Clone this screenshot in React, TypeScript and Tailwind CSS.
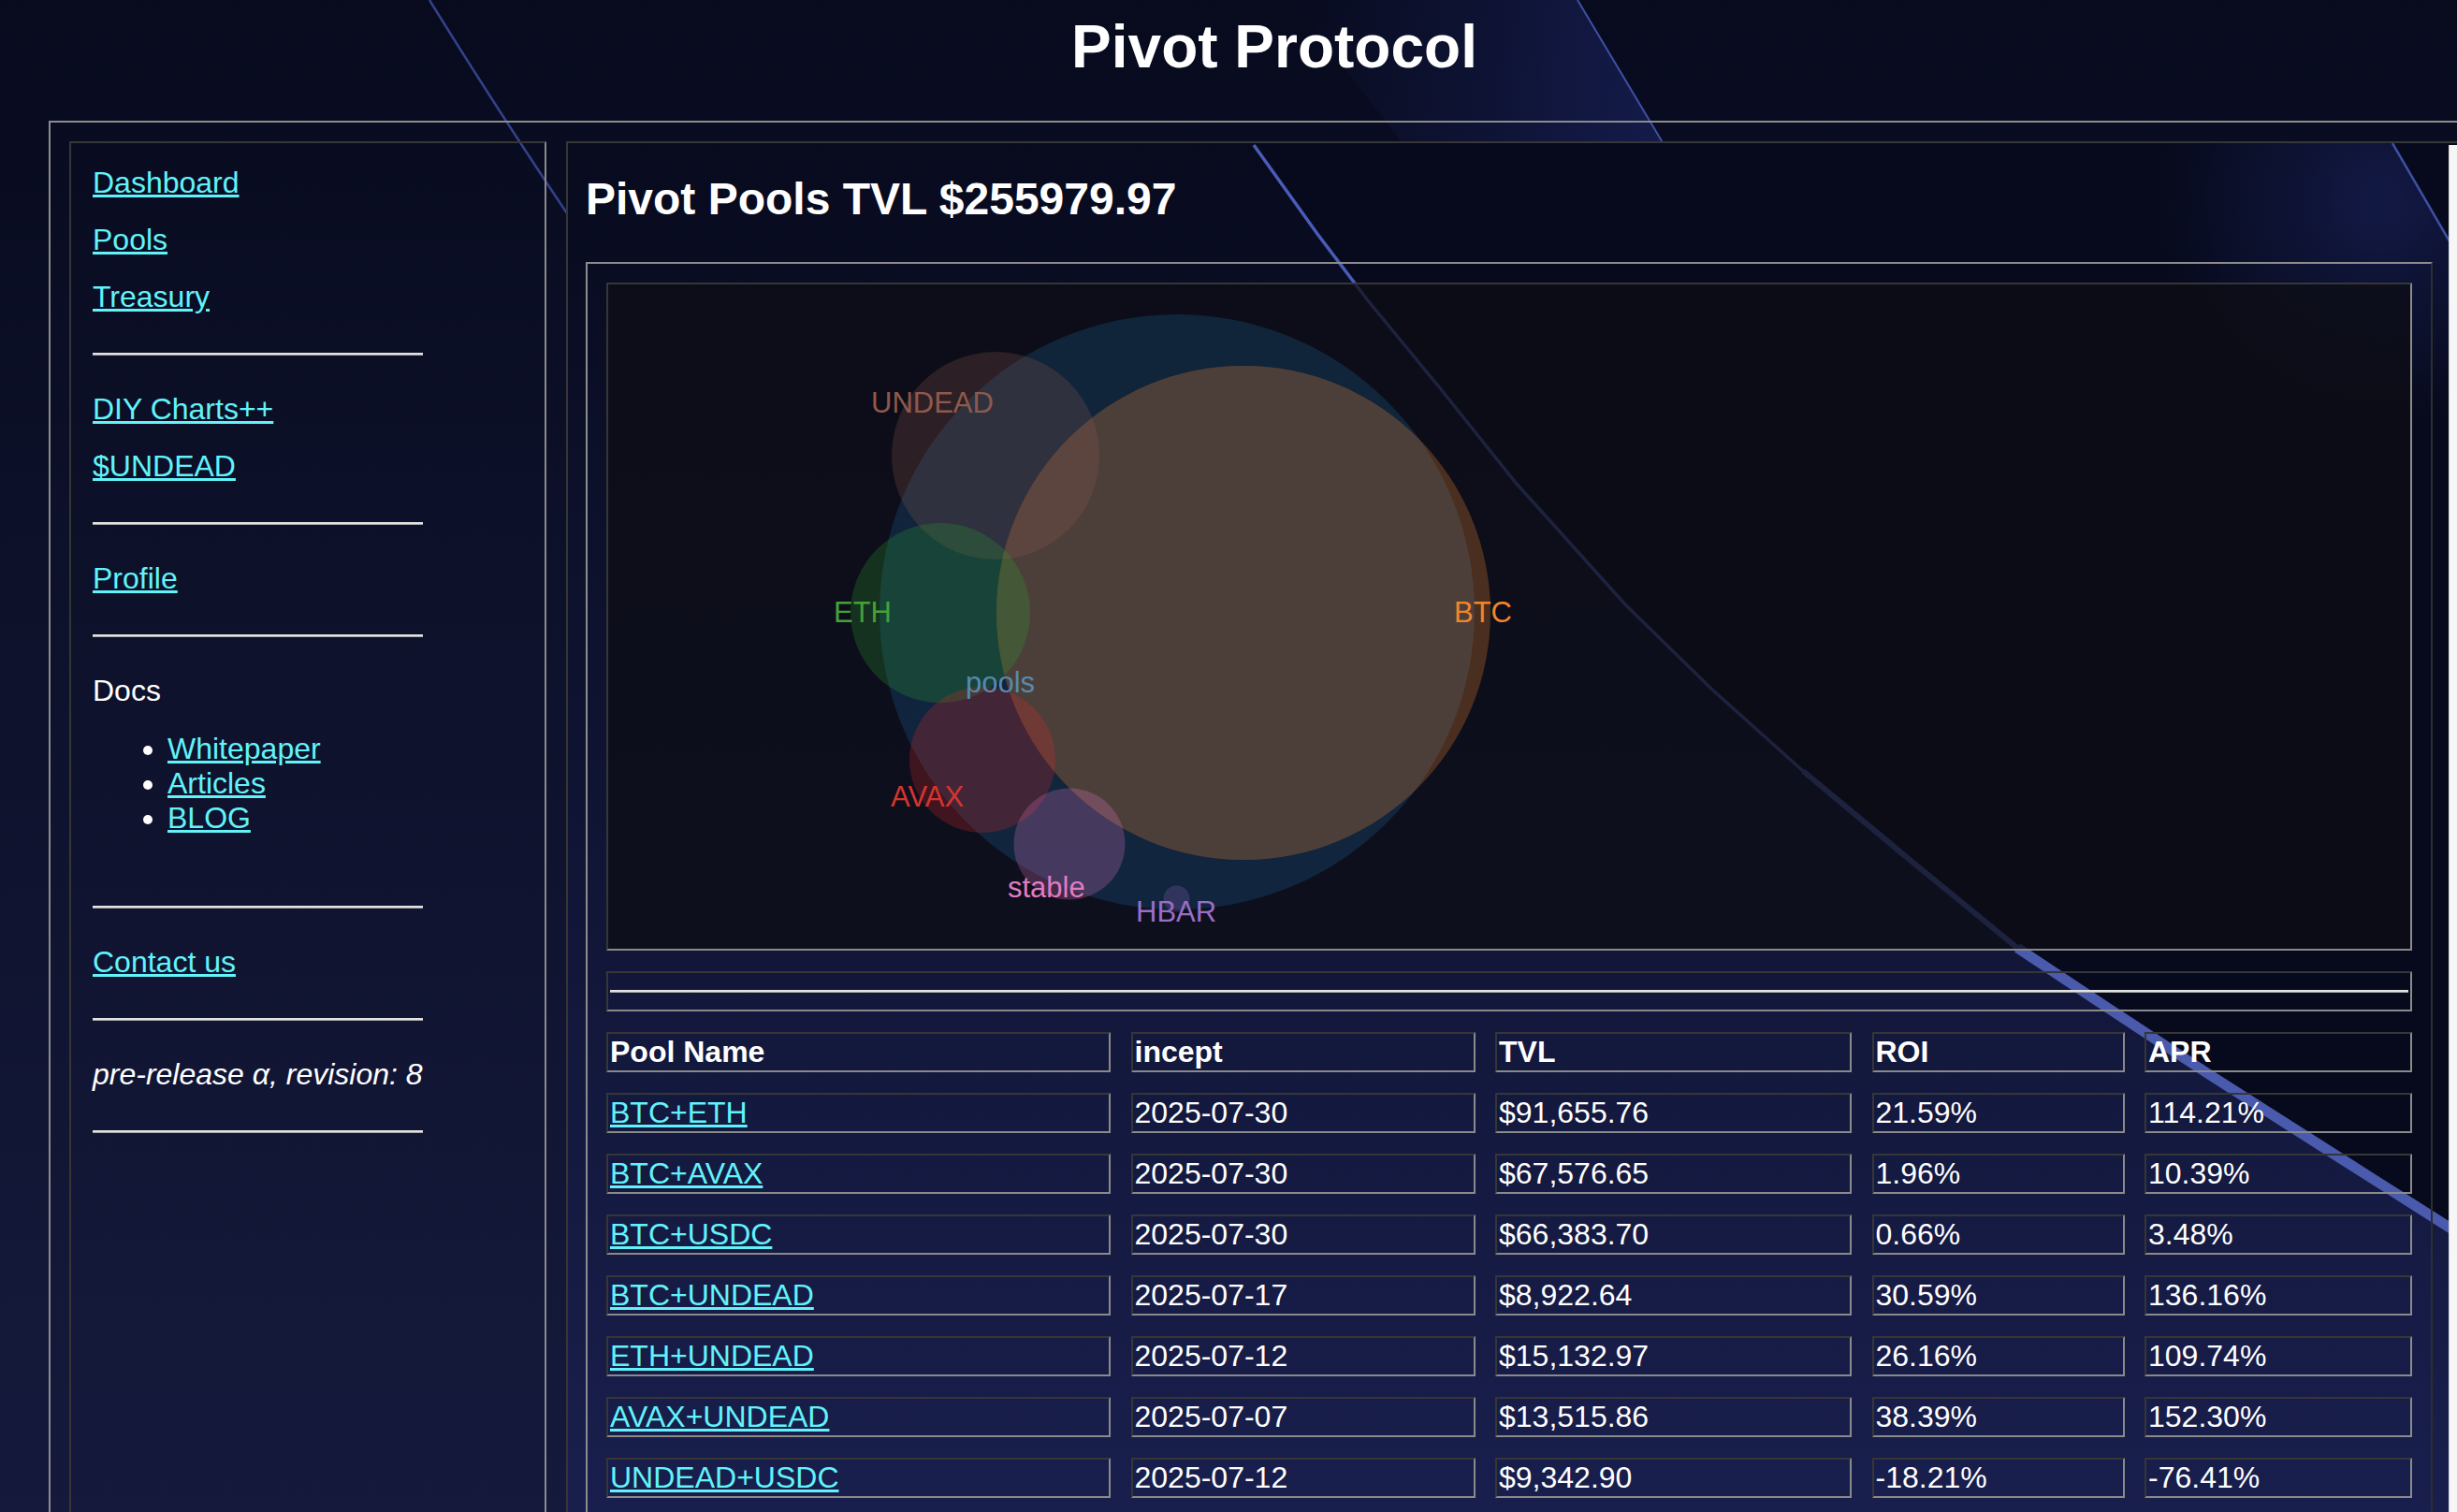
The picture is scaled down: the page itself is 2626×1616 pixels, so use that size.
const inset = "border-2 border-t-[#363636] border-l-[#363636] border-r-[#8a8a8a] border-b-[#8a8a8a]"
const outset = "border-2 border-t-[#8c8c8c] border-l-[#8c8c8c] border-r-[#2e2e2e] border-b-[#2e2e2e]"
const link = "text-[#62f3fa] underline"

const pools = [
  { name: "BTC+ETH", incept: "2025-07-30", tvl: "$91,655.76", roi: "21.59%", apr: "114.21%" },
  { name: "BTC+AVAX", incept: "2025-07-30", tvl: "$67,576.65", roi: "1.96%", apr: "10.39%" },
  { name: "BTC+USDC", incept: "2025-07-30", tvl: "$66,383.70", roi: "0.66%", apr: "3.48%" },
  { name: "BTC+UNDEAD", incept: "2025-07-17", tvl: "$8,922.64", roi: "30.59%", apr: "136.16%" },
  { name: "ETH+UNDEAD", incept: "2025-07-12", tvl: "$15,132.97", roi: "26.16%", apr: "109.74%" },
  { name: "AVAX+UNDEAD", incept: "2025-07-07", tvl: "$13,515.86", roi: "38.39%", apr: "152.30%" },
  { name: "UNDEAD+USDC", incept: "2025-07-12", tvl: "$9,342.90", roi: "-18.21%", apr: "-76.41%" },
]

// d3-style pack layout, positions measured off the chart
const root = { cx: 608, cy: 350, r: 318 }
const btc = { cx: 679, cy: 351, r: 264 }
const bubbles = [
  { id: "UNDEAD", cx: 414, cy: 183, r: 111, color: "#8c564b" },
  { id: "ETH", cx: 355, cy: 351, r: 96, color: "#2ca02c" },
  { id: "AVAX", cx: 400, cy: 508, r: 78, color: "#d62728" },
  { id: "stable", cx: 493, cy: 598, r: 59.5, color: "#e377c2" },
  { id: "HBAR", cx: 607.5, cy: 656.6, r: 14, color: "#9467bd" },
]

const labels = [
  { text: "UNDEAD", x: 281, y: 137, color: "#8c5a4c" },
  { text: "ETH", x: 241, y: 361, color: "#45a03a" },
  { text: "BTC", x: 904, y: 361, color: "#f2852c" },
  { text: "pools", x: 382, y: 436, color: "#5889ae" },
  { text: "AVAX", x: 302, y: 558, color: "#d6342f" },
  { text: "stable", x: 427, y: 655, color: "#e27cc2" },
  { text: "HBAR", x: 564, y: 681, color: "#9a6ec8" },
]

// light streak across the main panel (page coords)
const streak = [
  [1340, 155], [1408, 250], [1461, 320], [1540, 416], [1620, 516], [1737, 646], [1830, 737],
  [1927, 824], [2040, 918], [2156, 1013], [2260, 1082], [2359, 1147], [2500, 1237], [2626, 1317], [2720, 1376],
]
const pts = (a: number[][]) => a.map((p) => p.join(",")).join(" ")

function Hr({ className = "" }: { className?: string }) {
  return <div className={`h-[3px] border-t-2 border-b border-t-[#e2e2e2] border-b-[#a8a8a8] ${className}`} />
}

function PageArt() {
  return (
    <svg className="pointer-events-none absolute inset-0" width="2626" height="1616">
      <defs>
        <linearGradient id="glowB" x1="1380" y1="0" x2="1780" y2="0" gradientUnits="userSpaceOnUse">
          <stop offset="0" stopColor="#141b4c" stopOpacity="0" />
          <stop offset="1" stopColor="#161e52" stopOpacity="0.85" />
        </linearGradient>
      </defs>
      <path d="M459,0 Q530,115 614,240" fill="none" stroke="#33428a" strokeWidth="2.5" />
      <polygon points="1380,0 1686,0 1778,154 1500,154" fill="url(#glowB)" />
      <line x1="1686" y1="0" x2="1778" y2="154" stroke="#3f50a4" strokeWidth="2" />
    </svg>
  )
}

function MainArt() {
  return (
    <svg className="pointer-events-none absolute inset-0" width="2044" height="1600">
      <defs>
        <radialGradient id="glowD" cx="2545" cy="215" r="240" gradientUnits="userSpaceOnUse">
          <stop offset="0" stopColor="#161e52" stopOpacity="0.75" />
          <stop offset="1" stopColor="#161e52" stopOpacity="0" />
        </radialGradient>
      </defs>
      <g transform="translate(-607,-153)">
        <polygon points={`${pts(streak)} 2720,140 1340,140`} fill="#070a1c" />
        <polygon points="2250,153 2557,153 2650,313 2650,600 2250,600" fill="url(#glowD)" />
        <line x1="2557" y1="153" x2="2650" y2="313" stroke="#3f50a4" strokeWidth="2.5" />
        <polyline points={pts(streak.slice(0, 8))} fill="none" stroke="#4a5cb8" strokeWidth="3.5" />
        <polyline points={pts(streak.slice(7, 10))} fill="none" stroke="#4a5cb8" strokeWidth="6" />
        <polyline points={pts(streak.slice(9))} fill="none" stroke="#4a5aad" strokeWidth="11" />
      </g>
    </svg>
  )
}

function BubbleChart() {
  return (
    <svg width="1926" height="710" className="block">
      <defs>
        <clipPath id="rootClip">
          <circle cx={root.cx} cy={root.cy} r={root.r} />
        </clipPath>
      </defs>
      <circle cx={root.cx} cy={root.cy} r={root.r} fill="#1f77b4" fillOpacity="0.22" />
      <circle cx={btc.cx} cy={btc.cy} r={btc.r} fill="#4a2e1f" />
      <circle cx={btc.cx} cy={btc.cy} r={btc.r} fill="#4c3f3a" clipPath="url(#rootClip)" />
      {bubbles.map((b) => (
        <circle key={b.id} cx={b.cx} cy={b.cy} r={b.r} fill={b.color} fillOpacity="0.25" />
      ))}
      {labels.map((l) => (
        <text key={l.text} x={l.x} y={l.y} fill={l.color} fontSize="31" fontFamily="Liberation Sans, Arial, sans-serif">
          {l.text}
        </text>
      ))}
    </svg>
  )
}

function Sidebar() {
  const line = "leading-[37px] h-[37px]"
  return (
    <div className={`${inset} w-[510px] shrink-0 pl-[23px] pt-[24px] text-[32px]`}>
      <div className={line}><a className={link}>Dashboard</a></div>
      <div className={`${line} mt-[24px]`}><a className={link}>Pools</a></div>
      <div className={`${line} mt-[24px]`}><a className={link}>Treasury</a></div>
      <Hr className="mt-[41px] mb-[39px] w-[353px]" />
      <div className={line}><a className={link}>DIY Charts++</a></div>
      <div className={`${line} mt-[24px]`}><a className={link}>$UNDEAD</a></div>
      <Hr className="mt-[41px] mb-[39px] w-[353px]" />
      <div className={line}><a className={link}>Profile</a></div>
      <Hr className="mt-[41px] mb-[39px] w-[353px]" />
      <div className={line}>Docs</div>
      <ul className="mt-[25px] list-disc pl-[80px] leading-[37px]">
        <li><a className={link}>Whitepaper</a></li>
        <li><a className={link}>Articles</a></li>
        <li><a className={link}>BLOG</a></li>
      </ul>
      <Hr className="mt-[75px] mb-[39px] w-[353px]" />
      <div className={line}><a className={link}>Contact us</a></div>
      <Hr className="mt-[41px] mb-[39px] w-[353px]" />
      <div className={`${line} italic`}>pre-release α, revision: 8</div>
      <Hr className="mt-[41px] w-[353px]" />
    </div>
  )
}

function Cell({ children, head }: { children: React.ReactNode; head?: boolean }) {
  return (
    <div className={`${inset} whitespace-nowrap p-[2px] text-[32px] leading-[35px] ${head ? "font-bold" : ""}`}>
      {children}
    </div>
  )
}

function Main() {
  return (
    <div className={`${inset} relative flex w-[2044px] shrink-0 overflow-hidden bg-gradient-to-b from-[#080b1e] to-[#1a2050]`}>
      <MainArt />
      <div className="relative flex-1 pl-[19px] pt-[32px]">
        <h2 className="text-[48px] font-bold leading-[55px]">Pivot Pools TVL $255979.97</h2>
        <div className={`${outset} mt-[40px] flex w-[1974px] flex-col gap-[22px] p-[20px]`}>
          <div className={`${inset} h-[714px] bg-[#0e0e14]/[0.74]`}>
            <BubbleChart />
          </div>
          <div className={`${inset} p-[2px]`}>
            <Hr className="my-[16px]" />
          </div>
          <div className="grid grid-cols-[539px_368px_381px_270px_286px] gap-x-[21.5px] gap-y-[22px]">
            <Cell head>Pool Name</Cell>
            <Cell head>incept</Cell>
            <Cell head>TVL</Cell>
            <Cell head>ROI</Cell>
            <Cell head>APR</Cell>
            {pools.map((p) => (
              <>
                <Cell key={p.name}><a className={link}>{p.name}</a></Cell>
                <Cell>{p.incept}</Cell>
                <Cell>{p.tvl}</Cell>
                <Cell>{p.roi}</Cell>
                <Cell>{p.apr}</Cell>
              </>
            ))}
          </div>
        </div>
      </div>
      <div className="relative mt-[2px] w-[30px] shrink-0 border-l border-[#d6d6d6] bg-[#f6f6f6]" />
    </div>
  )
}

export default function App() {
  return (
    <div className="relative h-[1616px] w-[2626px] overflow-hidden bg-gradient-to-b from-[#080b1e] to-[#151a3d] font-['Liberation_Sans',Arial,sans-serif] text-white">
      <PageArt />
      <div className="relative w-[2724px]">
        <h1 className="h-[129px] pt-[18px] text-center text-[64px] font-bold leading-[64px]">Pivot Protocol</h1>
        <div className={`${outset} ml-[52px] flex h-[1600px] w-fit gap-[21px] p-[20px]`}>
          <Sidebar />
          <Main />
        </div>
      </div>
    </div>
  )
}
